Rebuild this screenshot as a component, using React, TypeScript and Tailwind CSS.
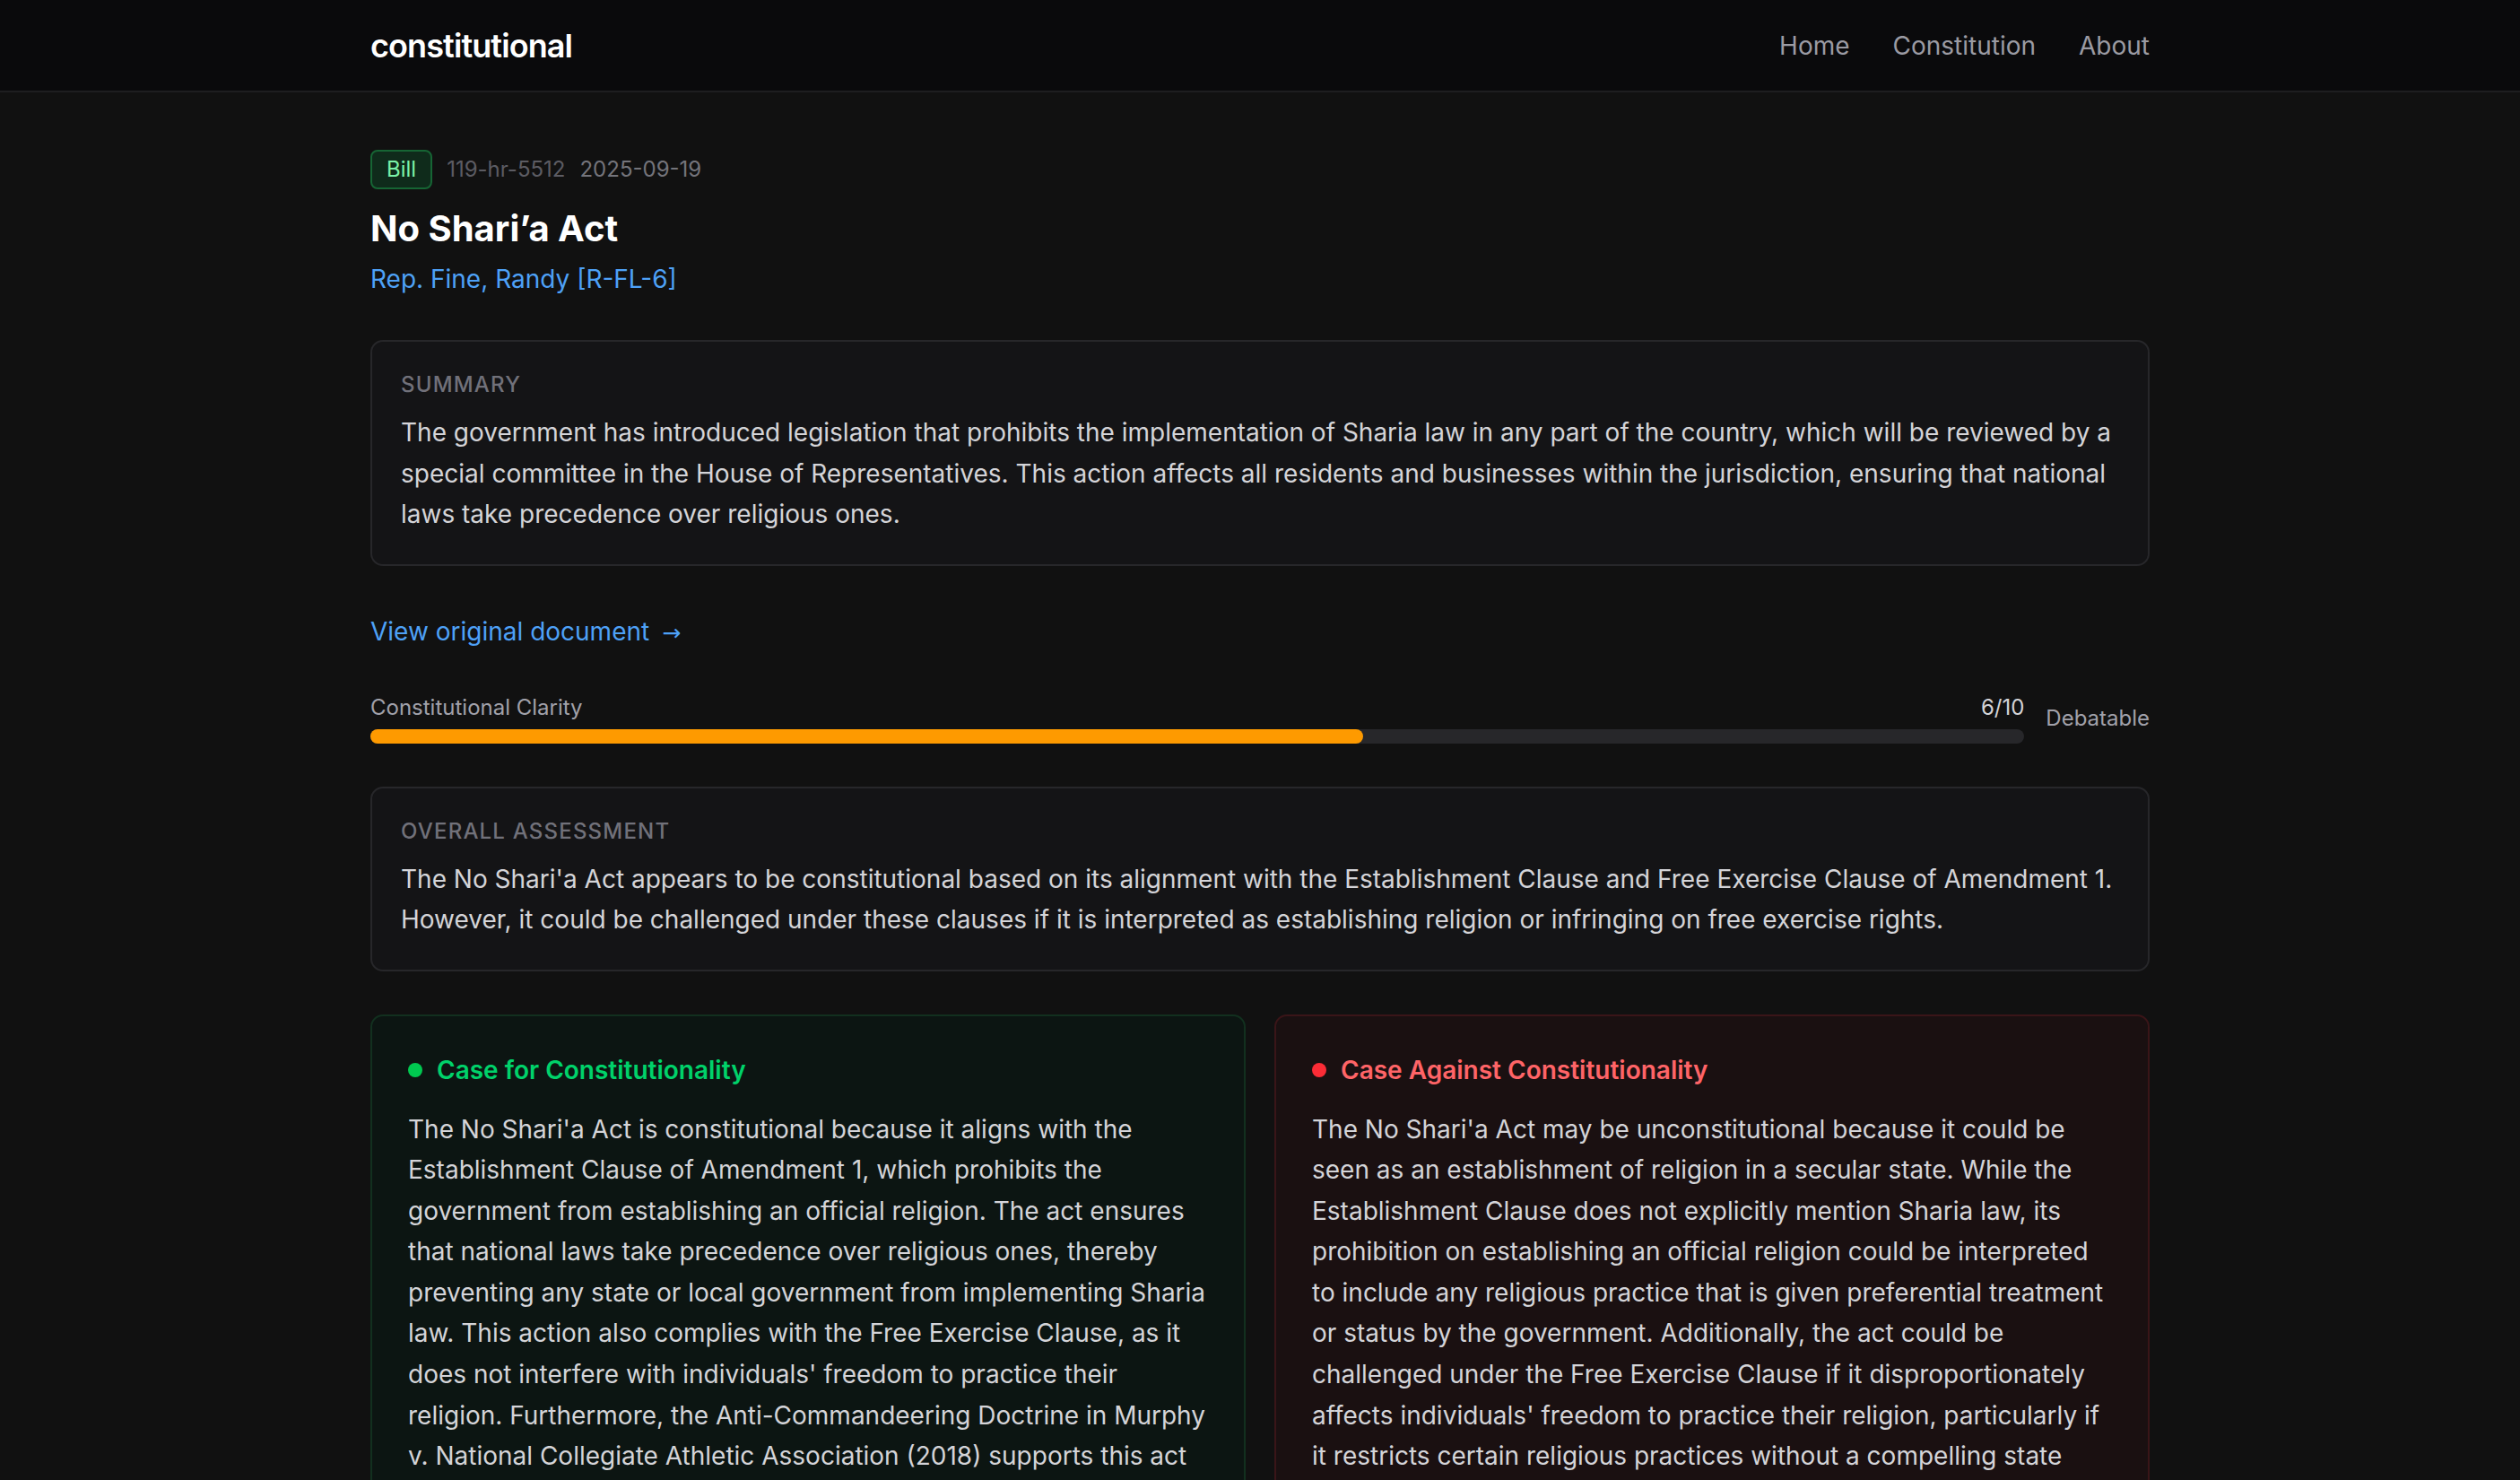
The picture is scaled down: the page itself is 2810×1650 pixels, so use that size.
import React from 'react';

type Case = {
  tone: 'for' | 'against';
  title: string;
  body: string;
};

const bill = {
  type: 'Bill',
  id: '119-hr-5512',
  date: '2025-09-19',
  title: 'No Shari’a Act',
  sponsor: 'Rep. Fine, Randy [R-FL-6]',
  summary:
    'The government has introduced legislation that prohibits the implementation of Sharia law in any part of the country, which will be reviewed by a special committee in the House of Representatives. This action affects all residents and businesses within the jurisdiction, ensuring that national laws take precedence over religious ones.',
  score: 6,
  verdict: 'Debatable',
  assessment:
    "The No Shari'a Act appears to be constitutional based on its alignment with the Establishment Clause and Free Exercise Clause of Amendment 1. However, it could be challenged under these clauses if it is interpreted as establishing religion or infringing on free exercise rights.",
};

const cases: Case[] = [
  {
    tone: 'for',
    title: 'Case for Constitutionality',
    body: "The No Shari'a Act is constitutional because it aligns with the Establishment Clause of Amendment 1, which prohibits the government from establishing an official religion. The act ensures that national laws take precedence over religious ones, thereby preventing any state or local government from implementing Sharia law. This action also complies with the Free Exercise Clause, as it does not interfere with individuals' freedom to practice their religion. Furthermore, the Anti-Commandeering Doctrine in Murphy v. National Collegiate Athletic Association (2018) supports this act by keeping the federal government from compelling states to enforce religious law.",
  },
  {
    tone: 'against',
    title: 'Case Against Constitutionality',
    body: "The No Shari'a Act may be unconstitutional because it could be seen as an establishment of religion in a secular state. While the Establishment Clause does not explicitly mention Sharia law, its prohibition on establishing an official religion could be interpreted to include any religious practice that is given preferential treatment or status by the government. Additionally, the act could be challenged under the Free Exercise Clause if it disproportionately affects individuals' freedom to practice their religion, particularly if it restricts certain religious practices without a compelling state interest.",
  },
];

const Panel: React.FC<{ label: string; text: string }> = ({ label, text }) => (
  <div className="rounded-[14px] border-2 border-[#27272a] bg-[#141416] p-8">
    <div className="mb-[15px] text-[24px] leading-[32px] font-medium uppercase tracking-wider text-[#71717a]">{label}</div>
    <p className="text-[28px] leading-[45.5px] text-[#d4d4d8]">{text}</p>
  </div>
);

const CaseCard: React.FC<{ c: Case }> = ({ c }) => {
  const isFor = c.tone === 'for';
  return (
    <div
      className={
        isFor
          ? 'rounded-[14px] border-2 border-[#12301f] bg-[#0c1512] p-10'
          : 'rounded-[14px] border-2 border-[#3a1518] bg-[#1a1011] p-10'
      }
    >
      <div className="mb-6 flex items-center gap-4">
        <span className={isFor ? 'h-4 w-4 rounded-full bg-[#00c950]' : 'h-4 w-4 rounded-full bg-[#fb2c36]'} />
        <h3 className={isFor ? 'text-[28px] leading-[40px] font-semibold text-[#00d26a]' : 'text-[28px] leading-[40px] font-semibold text-[#ff6467]'}>
          {c.title}
        </h3>
      </div>
      <p className="text-[28px] leading-[45.6px] text-[#d4d4d8]">{c.body}</p>
    </div>
  );
};

const App: React.FC = () => {
  const pct = (bill.score / 10) * 100;

  return (
    <div className="min-h-screen bg-[#111111] font-['Inter',sans-serif] text-white">
      {/* Header */}
      <header className="border-b-2 border-[#1e1e20] bg-[#0a0a0c]">
        <div className="mx-auto flex h-[101px] max-w-[2048px] items-center justify-between px-8">
          <span className="text-[36px] font-semibold tracking-tight text-white">constitutional</span>
          <nav className="flex items-center gap-12 text-[28px] text-[#9b9ba3]">
            <a>Home</a>
            <a>Constitution</a>
            <a>About</a>
          </nav>
        </div>
      </header>

      <main className="mx-auto max-w-[2048px] px-8 pt-16 pb-16">
        {/* Meta */}
        <div className="flex items-center gap-4 text-[24px] leading-[32px]">
          <span className="rounded-lg border-2 border-[#166534] bg-[#0f2b1b] px-4 py-1 text-[#7bf1a8]">{bill.type}</span>
          <span className="text-[#5c5c63]">{bill.id}</span>
          <span className="text-[#74747b]">{bill.date}</span>
        </div>
        <h1 className="mt-4 text-[40px] leading-[56px] font-bold text-white">{bill.title}</h1>
        <div className="mt-2 text-[28px] leading-[40px] text-[#4ea1f7]">{bill.sponsor}</div>

        <div className="mt-12 flex flex-col gap-12">
          <Panel label="Summary" text={bill.summary} />

          <a className="mt-[6px] text-[28px] leading-[39px] text-[#4ea1f7]">
            View original document<span className="ml-[14px] font-['DejaVu_Sans',sans-serif] text-[25px]">→</span>
          </a>

          {/* Clarity score */}
          <div className="flex items-center gap-6">
            <div className="flex-1">
              <div className="mb-2 flex items-center justify-between text-[24px] leading-[32px]">
                <span className="text-[#a1a1aa]">Constitutional Clarity</span>
                <span className="text-[#d4d4d8]">{bill.score}/10</span>
              </div>
              <div className="h-4 w-full rounded-full bg-[#27272a]">
                <div className="h-4 rounded-full bg-amber-500" style={{ width: `${pct}%` }} />
              </div>
            </div>
            <span className="text-[24px] leading-[32px] text-[#a1a1aa]">{bill.verdict}</span>
          </div>

          <Panel label="Overall Assessment" text={bill.assessment} />

          <div className="grid grid-cols-2 gap-8">
            {cases.map((c) => (
              <CaseCard key={c.tone} c={c} />
            ))}
          </div>
        </div>
      </main>
    </div>
  );
};

export default App;
